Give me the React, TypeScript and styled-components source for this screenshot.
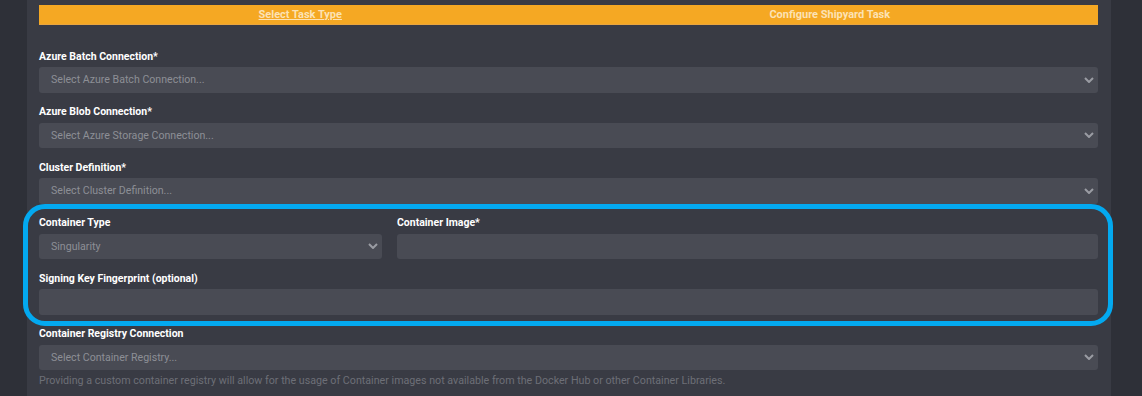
import React from "react";
import styled, { createGlobalStyle } from "styled-components";

const Global = createGlobalStyle`
  html, body { margin: 0; padding: 0; background: #2e3038; }
  body { font-family: Roboto, "Liberation Sans", Arial, sans-serif; }
  #root { min-height: 396px; }
`;

const Page = styled.div`
  height: 396px;
  overflow: hidden;
  background: #2e3038;
`;

const Panel = styled.div`
  margin-left: 27px;
  width: 1084px;
  height: 396px;
  box-sizing: border-box;
  background: #393b44;
  padding: 5px 13px 0 12px;
`;

const StepBar = styled.div`
  display: flex;
  height: 20px;
  background: #f5a823;
  border-bottom: 1px solid #e9a540;
  box-sizing: border-box;
  margin-bottom: 22px;
`;

const Step = styled.div<{ $link?: boolean }>`
  flex: 1;
  display: flex;
  align-items: center;
  justify-content: center;
  padding-right: 7px;
  font-size: 11px;
  font-weight: 700;
  color: #fce2b4;
  text-decoration: ${(p) => (p.$link ? "underline" : "none")};
`;

const Form = styled.div`
  display: flex;
  flex-direction: column;
  gap: 10px;
`;

const Group = styled.div`
  display: flex;
  flex-direction: column;
  min-width: 0;
`;

const Label = styled.div`
  font-size: 10.5px;
  line-height: 16px;
  font-weight: 700;
  color: #ffffff;
  padding-top: 2.5px;
  margin-top: -1px;
  margin-bottom: 2.5px;
  white-space: nowrap;
`;

const Control = styled.div`
  height: 25.5px;
  background: #494b54;
  border-radius: 3px;
  display: flex;
  align-items: center;
  padding: 0 12px;
  font-size: 10.6px;
  color: #8d8f96;
  position: relative;
`;

const Chevron = styled.svg`
  position: absolute;
  right: 4px;
  top: 50%;
  margin-top: -3px;
`;

const Hint = styled.div`
  margin-top: 4px;
  font-size: 10.7px;
  line-height: 14px;
  color: #6d6f77;
  white-space: nowrap;
`;

const Highlight = styled.div`
  position: relative;
  display: flex;
  flex-direction: column;
  gap: 10px;
`;

const HighlightRing = styled.div`
  position: absolute;
  top: -9.5px;
  left: -16px;
  right: -15px;
  bottom: -11.5px;
  border: 5px solid #03a9f0;
  border-radius: 22px;
  pointer-events: none;
`;

const Row = styled.div`
  display: flex;
  gap: 15px;
`;

const Col = styled.div<{ $third?: boolean }>`
  display: flex;
  flex-direction: column;
  ${(p) =>
    p.$third
      ? "width: calc((100% + 15px) / 3 - 15px); flex: none;"
      : "flex: 1; min-width: 0;"}
`;

const Down = () => (
  <Chevron width="10" height="6" viewBox="0 0 10 6">
    <polyline points="1,1 5,5 9,1" fill="none" stroke="#9a9ca3" strokeWidth="2" />
  </Chevron>
);

const SelectField = ({ label, placeholder }: { label: string; placeholder: string }) => (
  <Group>
    <Label>{label}</Label>
    <Control>
      {placeholder}
      <Down />
    </Control>
  </Group>
);

export default function App() {
  return (
    <Page>
      <Global />
      <Panel>
        <StepBar>
          <Step $link>Select Task Type</Step>
          <Step>Configure Shipyard Task</Step>
        </StepBar>
        <Form>
          <SelectField label="Azure Batch Connection*" placeholder="Select Azure Batch Connection..." />
          <SelectField label="Azure Blob Connection*" placeholder="Select Azure Storage Connection..." />
          <SelectField label="Cluster Definition*" placeholder="Select Cluster Definition..." />
          <Highlight>
            <HighlightRing />
            <Row>
              <Col $third>
                <Label>Container Type</Label>
                <Control>
                  Singularity
                  <Down />
                </Control>
              </Col>
              <Col>
                <Label>Container Image*</Label>
                <Control />
              </Col>
            </Row>
            <Group>
              <Label>Signing Key Fingerprint (optional)</Label>
              <Control />
            </Group>
          </Highlight>
          <Group>
            <Label>Container Registry Connection</Label>
            <Control>
              Select Container Registry...
              <Down />
            </Control>
            <Hint>
              Providing a custom container registry will allow for the usage of Container images not available from the Docker Hub or other Container Libraries.
            </Hint>
          </Group>
        </Form>
      </Panel>
    </Page>
  );
}
